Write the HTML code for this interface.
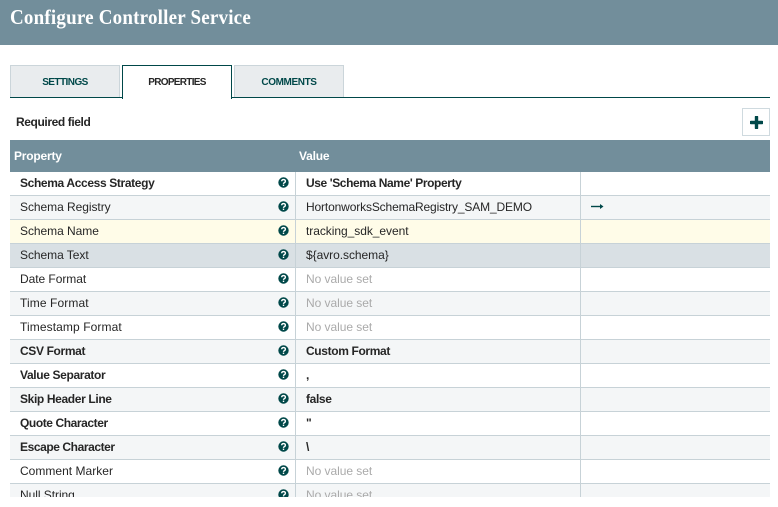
<!DOCTYPE html>
<html><head><meta charset="utf-8"><style>
html,body{margin:0;padding:0;background:#fff;width:778px;height:507px;overflow:hidden}
body{position:relative;font-family:"Liberation Sans",sans-serif;color:#262626}
div{position:absolute;box-sizing:border-box;white-space:nowrap}
.hdr{left:0;top:0;width:778px;height:45px;background:#728e9b}
.title{left:10px;top:5px;font:bold 19px/24px "Liberation Serif",serif;color:#fff;letter-spacing:.2px;transform:scaleY(1.12);transform-origin:0 0}
.tab{top:65px;height:33px;background:#e9ecee;border:1px solid #cbd5da;border-bottom:none;font:bold 10px/33px "Liberation Sans",sans-serif;color:#004849;text-align:center;width:110px}
.line{left:10px;top:97px;width:760px;height:1px;background:#004849}
.act{left:122px;top:65px;width:110px;height:34px;background:#fff;border:1px solid #004849;border-bottom:none;font:bold 10px/33px "Liberation Sans",sans-serif;color:#262626;text-align:center;letter-spacing:-.7px}
.req{left:16px;top:115px;font:bold 12px/14px "Liberation Sans",sans-serif;letter-spacing:-.4px}
.add{left:742px;top:108px;width:28px;height:28px;border:1px solid #cfdadf}
.th{left:10px;top:140px;width:760px;height:32px;background:#728e9b}
.tt{top:149px;font:bold 12px/14px "Liberation Sans",sans-serif;color:#fff;letter-spacing:-.2px}
.rows{left:10px;top:172px;width:760px;height:325px;overflow:hidden}
.r{left:0;width:760px;height:24px;border-bottom:1px solid #c7d2d7;font-size:12px;line-height:23px}
.e{background:#f4f6f7}.w{background:#fff}.y{background:#fffce8}.g{background:#d9e0e4}
.n,.v{letter-spacing:-.05px}
.n{left:10px;top:0}.v{left:296px;top:0}
.b{font-weight:bold;letter-spacing:-.36px}
.u{color:#aaa;letter-spacing:-.05px}
.c1{left:285px;top:0;width:1px;height:24px;background:#c7d2d7}
.c2{left:570px;top:0;width:1px;height:24px;background:#c7d2d7}
svg{position:absolute}
.q{left:268px;top:5px;width:11px;height:11px}
</style></head><body>
<div class="hdr"></div>
<div class="title">Configure Controller Service</div>
<div class="tab" style="left:10px;letter-spacing:-.55px">SETTINGS</div>
<div class="tab" style="left:234px;letter-spacing:-.4px">COMMENTS</div>
<div class="line"></div>
<div class="act">PROPERTIES</div>
<div class="req">Required field</div>
<div class="add"><svg style="left:7px;top:7px" width="13" height="13" viewBox="0 0 13 13"><path d="M6.5 1v11M1 6.5h11" stroke="#004849" stroke-width="3.4" stroke-linecap="round"/></svg></div>
<div class="th"></div>
<div class="tt" style="left:14px">Property</div>
<div class="tt" style="left:299px">Value</div>
<div class="rows">
<div class="r w" style="top:0"><div class="n b">Schema Access Strategy</div><div class="v b" style="letter-spacing:-.4px">Use 'Schema Name' Property</div><div class="c1"></div><div class="c2"></div><svg class="q" viewBox="0 0 11 11"><circle cx="5.5" cy="5.5" r="5.2" fill="#004849"/><path d="M3.7 4.3c0-2.3 3.7-2.3 3.7-.1 0 1.400-1.900 1.400-1.900 2.700" fill="none" stroke="#fff" stroke-width="1.400"/><rect x="4.800" y="7.600" width="1.400" height="1.400" fill="#fff"/></svg></div>
<div class="r e" style="top:24px"><div class="n">Schema Registry</div><div class="v" style="letter-spacing:-.14px">HortonworksSchemaRegistry_SAM_DEMO</div><div class="c1"></div><div class="c2"></div><svg class="q" viewBox="0 0 11 11"><circle cx="5.5" cy="5.5" r="5.2" fill="#004849"/><path d="M3.7 4.3c0-2.3 3.7-2.3 3.7-.1 0 1.400-1.900 1.400-1.900 2.700" fill="none" stroke="#fff" stroke-width="1.400"/><rect x="4.800" y="7.600" width="1.400" height="1.400" fill="#fff"/></svg><svg style="left:581px;top:7px" width="13" height="7" viewBox="0 0 13 7"><path d="M0 3.500h10" stroke="#004849" stroke-width="1.400"/><path d="M9 1l3.500 2.500L9 6z" fill="#004849"/></svg></div>
<div class="r y" style="top:48px"><div class="n">Schema Name</div><div class="v">tracking_sdk_event</div><div class="c1"></div><div class="c2"></div><svg class="q" viewBox="0 0 11 11"><circle cx="5.5" cy="5.5" r="5.2" fill="#004849"/><path d="M3.7 4.3c0-2.3 3.7-2.3 3.7-.1 0 1.400-1.900 1.400-1.900 2.700" fill="none" stroke="#fff" stroke-width="1.400"/><rect x="4.800" y="7.600" width="1.400" height="1.400" fill="#fff"/></svg></div>
<div class="r g" style="top:72px"><div class="n">Schema Text</div><div class="v">${avro.schema}</div><div class="c1"></div><div class="c2"></div><svg class="q" viewBox="0 0 11 11"><circle cx="5.5" cy="5.5" r="5.2" fill="#004849"/><path d="M3.7 4.3c0-2.3 3.7-2.3 3.7-.1 0 1.400-1.900 1.400-1.900 2.700" fill="none" stroke="#fff" stroke-width="1.400"/><rect x="4.800" y="7.600" width="1.400" height="1.400" fill="#fff"/></svg></div>
<div class="r w" style="top:96px"><div class="n">Date Format</div><div class="v u">No value set</div><div class="c1"></div><div class="c2"></div><svg class="q" viewBox="0 0 11 11"><circle cx="5.5" cy="5.5" r="5.2" fill="#004849"/><path d="M3.7 4.3c0-2.3 3.7-2.3 3.7-.1 0 1.400-1.900 1.400-1.900 2.700" fill="none" stroke="#fff" stroke-width="1.400"/><rect x="4.800" y="7.600" width="1.400" height="1.400" fill="#fff"/></svg></div>
<div class="r e" style="top:120px"><div class="n" style="letter-spacing:.1px">Time Format</div><div class="v u">No value set</div><div class="c1"></div><div class="c2"></div><svg class="q" viewBox="0 0 11 11"><circle cx="5.5" cy="5.5" r="5.2" fill="#004849"/><path d="M3.7 4.3c0-2.3 3.7-2.3 3.7-.1 0 1.400-1.900 1.400-1.900 2.700" fill="none" stroke="#fff" stroke-width="1.400"/><rect x="4.800" y="7.600" width="1.400" height="1.400" fill="#fff"/></svg></div>
<div class="r w" style="top:144px"><div class="n" style="letter-spacing:.1px">Timestamp Format</div><div class="v u">No value set</div><div class="c1"></div><div class="c2"></div><svg class="q" viewBox="0 0 11 11"><circle cx="5.5" cy="5.5" r="5.2" fill="#004849"/><path d="M3.7 4.3c0-2.3 3.7-2.3 3.7-.1 0 1.400-1.900 1.400-1.900 2.700" fill="none" stroke="#fff" stroke-width="1.400"/><rect x="4.800" y="7.600" width="1.400" height="1.400" fill="#fff"/></svg></div>
<div class="r e" style="top:168px"><div class="n b">CSV Format</div><div class="v b">Custom Format</div><div class="c1"></div><div class="c2"></div><svg class="q" viewBox="0 0 11 11"><circle cx="5.5" cy="5.5" r="5.2" fill="#004849"/><path d="M3.7 4.3c0-2.3 3.7-2.3 3.7-.1 0 1.400-1.900 1.400-1.900 2.700" fill="none" stroke="#fff" stroke-width="1.400"/><rect x="4.800" y="7.600" width="1.400" height="1.400" fill="#fff"/></svg></div>
<div class="r w" style="top:192px"><div class="n b">Value Separator</div><div class="v b">,</div><div class="c1"></div><div class="c2"></div><svg class="q" viewBox="0 0 11 11"><circle cx="5.5" cy="5.5" r="5.2" fill="#004849"/><path d="M3.7 4.3c0-2.3 3.7-2.3 3.7-.1 0 1.400-1.900 1.400-1.900 2.700" fill="none" stroke="#fff" stroke-width="1.400"/><rect x="4.800" y="7.600" width="1.400" height="1.400" fill="#fff"/></svg></div>
<div class="r e" style="top:216px"><div class="n b">Skip Header Line</div><div class="v b">false</div><div class="c1"></div><div class="c2"></div><svg class="q" viewBox="0 0 11 11"><circle cx="5.5" cy="5.5" r="5.2" fill="#004849"/><path d="M3.7 4.3c0-2.3 3.7-2.3 3.7-.1 0 1.400-1.900 1.400-1.900 2.700" fill="none" stroke="#fff" stroke-width="1.400"/><rect x="4.800" y="7.600" width="1.400" height="1.400" fill="#fff"/></svg></div>
<div class="r w" style="top:240px"><div class="n b" style="letter-spacing:-.42px">Quote Character</div><div class="v b">"</div><div class="c1"></div><div class="c2"></div><svg class="q" viewBox="0 0 11 11"><circle cx="5.5" cy="5.5" r="5.2" fill="#004849"/><path d="M3.7 4.3c0-2.3 3.7-2.3 3.7-.1 0 1.400-1.900 1.400-1.900 2.700" fill="none" stroke="#fff" stroke-width="1.400"/><rect x="4.800" y="7.600" width="1.400" height="1.400" fill="#fff"/></svg></div>
<div class="r e" style="top:264px"><div class="n b" style="letter-spacing:-.42px">Escape Character</div><div class="v b">\</div><div class="c1"></div><div class="c2"></div><svg class="q" viewBox="0 0 11 11"><circle cx="5.5" cy="5.5" r="5.2" fill="#004849"/><path d="M3.7 4.3c0-2.3 3.7-2.3 3.7-.1 0 1.400-1.900 1.400-1.900 2.700" fill="none" stroke="#fff" stroke-width="1.400"/><rect x="4.800" y="7.600" width="1.400" height="1.400" fill="#fff"/></svg></div>
<div class="r w" style="top:288px"><div class="n" style="letter-spacing:.02px">Comment Marker</div><div class="v u">No value set</div><div class="c1"></div><div class="c2"></div><svg class="q" viewBox="0 0 11 11"><circle cx="5.5" cy="5.5" r="5.2" fill="#004849"/><path d="M3.7 4.3c0-2.3 3.7-2.3 3.7-.1 0 1.400-1.900 1.400-1.900 2.700" fill="none" stroke="#fff" stroke-width="1.400"/><rect x="4.800" y="7.600" width="1.400" height="1.400" fill="#fff"/></svg></div>
<div class="r e" style="top:312px"><div class="n">Null String</div><div class="v u">No value set</div><div class="c1"></div><div class="c2"></div><svg class="q" viewBox="0 0 11 11"><circle cx="5.5" cy="5.5" r="5.2" fill="#004849"/><path d="M3.7 4.3c0-2.3 3.7-2.3 3.7-.1 0 1.400-1.900 1.400-1.900 2.700" fill="none" stroke="#fff" stroke-width="1.400"/><rect x="4.800" y="7.600" width="1.400" height="1.400" fill="#fff"/></svg></div>
</div>
</body></html>
